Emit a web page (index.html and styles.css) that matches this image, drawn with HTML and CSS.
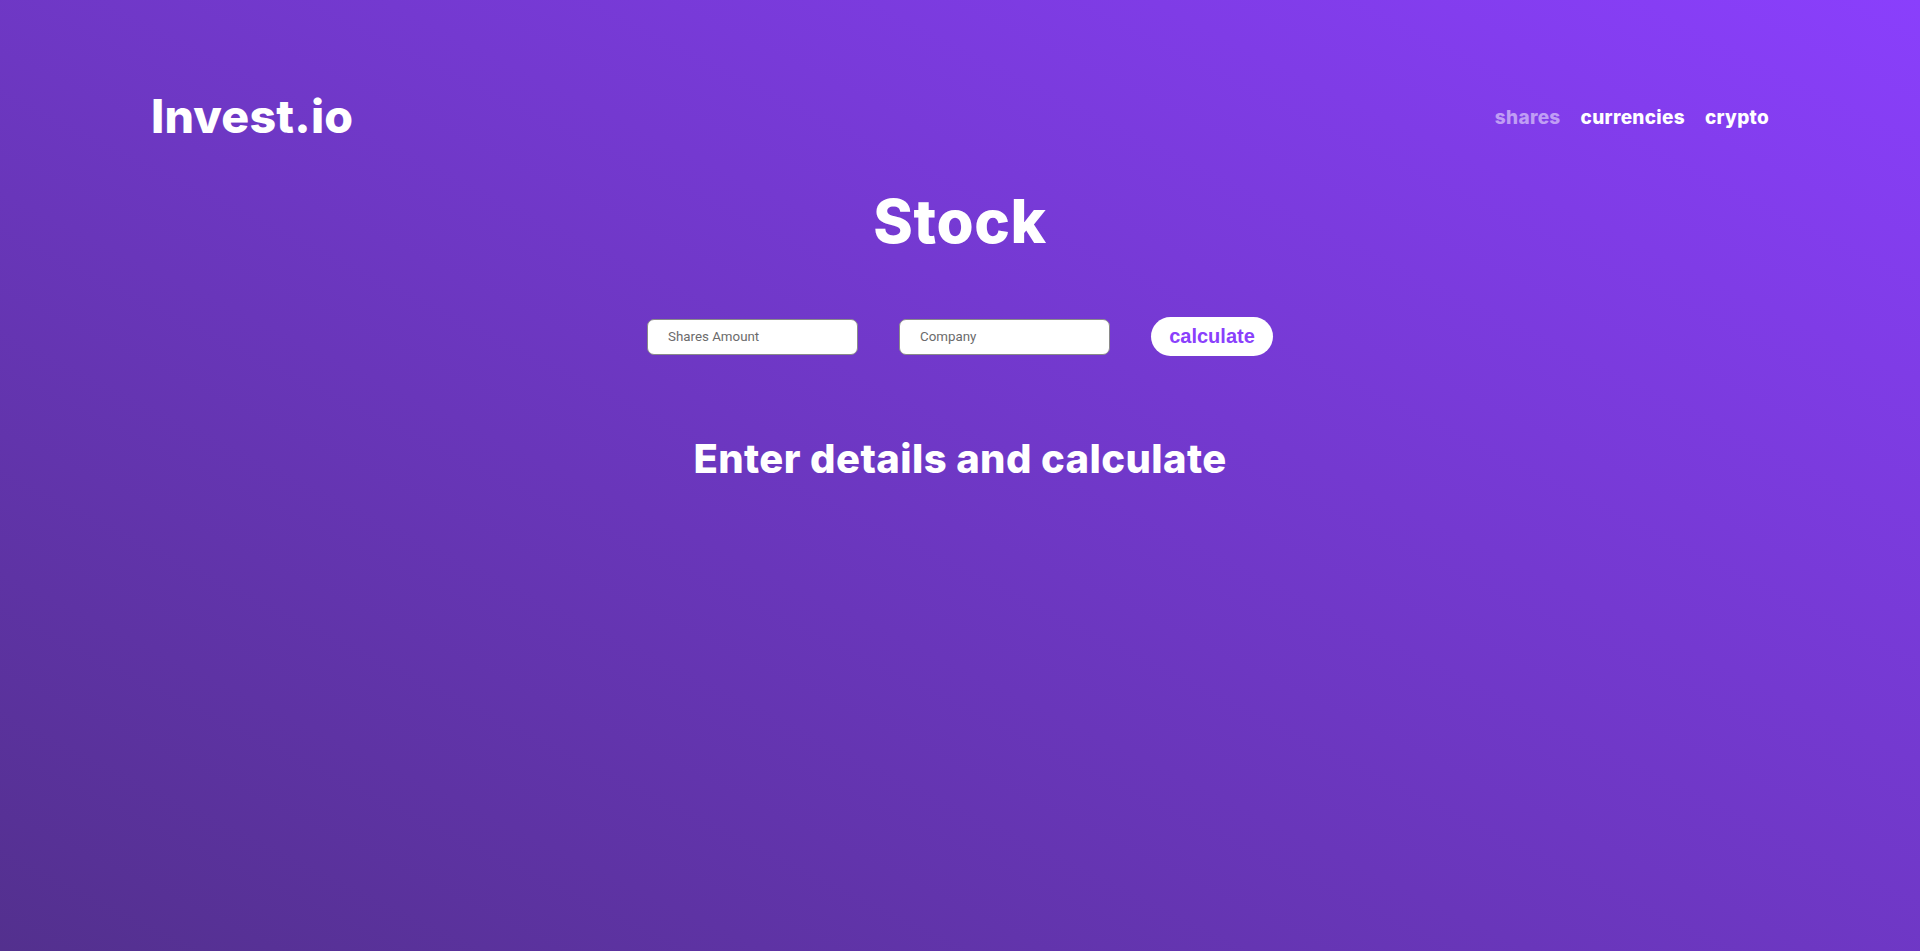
FILE: index.html
```html
<!DOCTYPE html>
<html lang="en">
<head>
<meta charset="utf-8">
<title>Invest.io</title>
<link rel="stylesheet" href="styles.css">
</head>
<body>
<div class="page">
  <header class="header">
    <div class="logo">Invest.io</div>
    <nav class="nav">
      <a class="nav-link active" href="#">shares</a>
      <a class="nav-link" href="#">currencies</a>
      <a class="nav-link" href="#">crypto</a>
    </nav>
  </header>
  <main class="main">
    <h1 class="title">Stock</h1>
    <form class="form">
      <input class="field" type="text" placeholder="Shares Amount">
      <input class="field" type="text" placeholder="Company">
      <button class="btn" type="button">calculate</button>
    </form>
    <h2 class="result">Enter details and calculate</h2>
  </main>
</div>
</body>
</html>
```

FILE: styles.css
```css
html, body {
  margin: 0;
  padding: 0;
}
body {
  min-height: 100vh;
  background: linear-gradient(to top right, #53308e, #8a3ffc);
  font-family: Inter, "Noto Sans", sans-serif;
  color: #fff;
}
.page {
  min-height: 100vh;
  display: flex;
  flex-direction: column;
}
.header {
  display: flex;
  justify-content: space-between;
  align-items: center;
  padding: 88px 151px 0 151px;
  height: 56px;
}
.logo {
  font-size: 46.5px;
  font-weight: 800;
  letter-spacing: 0.2px;
  line-height: 1;
}
.nav {
  display: flex;
  gap: 20px;
  margin-top: 3px;
}
.nav-link {
  color: #fff;
  text-decoration: none;
  font-weight: 800;
  font-size: 19px;
  letter-spacing: 0.3px;
}
.nav-link.active {
  color: rgba(255, 255, 255, 0.5);
}
.main {
  display: flex;
  flex-direction: column;
  align-items: center;
}
.title {
  margin: 44px 0 0 0;
  font-size: 60px;
  font-weight: 800;
  line-height: 1.1;
  letter-spacing: 0.6px;
}
.form {
  display: flex;
  align-items: center;
  gap: 41px;
  margin-top: 63px;
}
.field {
  box-sizing: border-box;
  width: 211px;
  height: 36px;
  border: 1px solid #8a8a8a;
  border-radius: 7px;
  padding: 0 20px;
  font-family: Roboto, "Liberation Sans", sans-serif;
  font-size: 13.33px;
  color: #333;
  background: #fff;
  outline: none;
}
.field::placeholder {
  color: #6b6b6b;
}
.btn {
  box-sizing: border-box;
  width: 122px;
  height: 39px;
  border: none;
  border-radius: 20px;
  background: #fff;
  color: #8a3ffc;
  font-family: "Liberation Sans", Arial, sans-serif;
  font-weight: 700;
  font-size: 20px;
  padding: 0;
  cursor: pointer;
}
.result {
  margin: 79px 0 0 0;
  font-size: 40px;
  font-weight: 800;
  line-height: 1.2;
  letter-spacing: 0.4px;
}
```
